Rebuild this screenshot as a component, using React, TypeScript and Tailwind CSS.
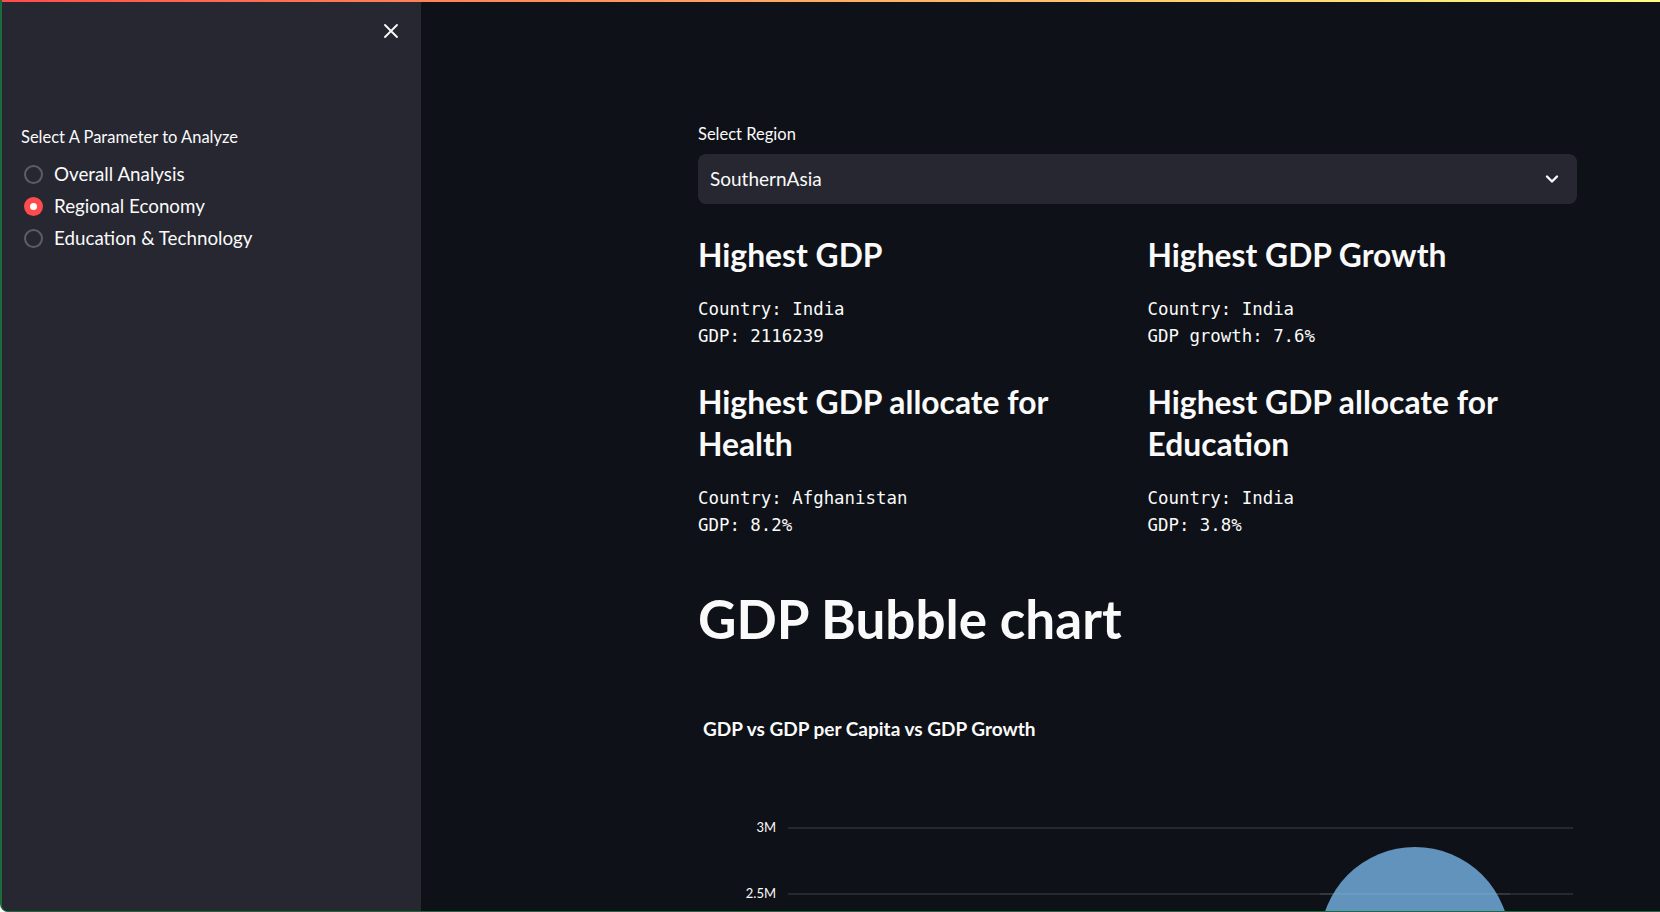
import React, { useState } from 'react';

const sans = { fontFamily: '"Lato", "Noto Sans", sans-serif' };
const mono = { fontFamily: '"DejaVu Sans Mono", "Liberation Mono", monospace' };

const options = ['Overall Analysis', 'Regional Economy', 'Education & Technology'];

const stats = [
  { title: 'Highest GDP', lines: ['Country: India', 'GDP: 2116239'] },
  { title: 'Highest GDP Growth', lines: ['Country: India', 'GDP growth: 7.6%'] },
  { title: 'Highest GDP allocate for Health', lines: ['Country: Afghanistan', 'GDP: 8.2%'] },
  { title: 'Highest GDP allocate for Education', lines: ['Country: India', 'GDP: 3.8%'] },
];

function Radio({ label, checked, onClick }: { label: string; checked: boolean; onClick: () => void }) {
  return (
    <button onClick={onClick} className="flex items-center h-[32px] text-left">
      {checked ? (
        <span className="w-[19px] h-[19px] rounded-full bg-[#ff4b4b] flex items-center justify-center ml-[3px]">
          <span className="w-[7px] h-[7px] rounded-full bg-white" />
        </span>
      ) : (
        <span className="w-[19px] h-[19px] rounded-full border-2 border-[#5c5e66] ml-[3px]" />
      )}
      <span className="ml-[11px] text-[18.8px] text-[#fafafa]">{label}</span>
    </button>
  );
}

function StatBlock({ title, lines }: { title: string; lines: string[] }) {
  return (
    <div>
      <h3 className="text-[31.8px] leading-[42px] font-bold text-[#fafafa]">{title}</h3>
      <div className="mt-[20px] text-[17.4px] leading-[27px] text-[#fafafa]" style={mono}>
        {lines.map((l) => (
          <div key={l}>{l}</div>
        ))}
      </div>
    </div>
  );
}

function BubbleChart() {
  return (
    <svg width="879" height="200" className="block">
      <text x="78" y="71" textAnchor="end" fontSize="13" fill="#fafafa" style={sans}>3M</text>
      <text x="78" y="137" textAnchor="end" fontSize="13" fill="#fafafa" style={sans}>2.5M</text>
      <line x1="90" x2="875" y1="67" y2="67" stroke="#2d3038" strokeWidth="1.5" />
      <line x1="90" x2="875" y1="133" y2="133" stroke="#2d3038" strokeWidth="1.5" />
      <circle cx="717" cy="181" r="95" fill="#6193bc" />
      <line x1="622" x2="812" y1="133" y2="133" stroke="#ffffff" strokeOpacity="0.1" strokeWidth="1.5" />
    </svg>
  );
}

export default function App() {
  const [choice, setChoice] = useState('Regional Economy');

  return (
    <div className="w-[1660px] h-[912px] overflow-hidden bg-[#0e1117] flex flex-col border-l-2 border-b border-[#1c6b3b] rounded-bl-lg" style={sans}>
      {/* decoration bar */}
      <div className="h-[2px] shrink-0 bg-gradient-to-r from-[#ff4b4b] to-[#fffd80]" />

      <div className="flex flex-1 min-h-0">
        {/* Sidebar */}
        <aside className="w-[419px] shrink-0 bg-[#262730] flex flex-col px-[19px]">
          <div className="flex justify-end pt-[21px] pr-[3px]">
            <button className="text-[#fafafa]">
              <svg width="16" height="16" viewBox="0 0 16 16">
                <path d="M2 2 L14 14 M14 2 L2 14" stroke="currentColor" strokeWidth="1.9" strokeLinecap="round" />
              </svg>
            </button>
          </div>
          <p className="mt-[87px] text-[16.5px] leading-[22px] text-[#fafafa]">Select A Parameter to Analyze</p>
          <div className="mt-[10px] flex flex-col">
            {options.map((o) => (
              <Radio key={o} label={o} checked={choice === o} onClick={() => setChoice(o)} />
            ))}
          </div>
        </aside>

        {/* Main */}
        <main className="flex-1 min-w-0 pl-[277px] pt-[121px]">
          <div className="w-[879px]">
            <label className="block text-[16.5px] leading-[22px] text-[#fafafa]">Select Region</label>
            <div className="mt-[9px] h-[50px] rounded-[8px] bg-[#262730] flex items-center justify-between pl-[12px] pr-[18px]">
              <span className="text-[19px] text-[#fafafa]">SouthernAsia</span>
              <svg width="14" height="10" viewBox="0 0 14 10">
                <path d="M2 2.5 L7 7.5 L12 2.5" stroke="#fafafa" strokeWidth="2.4" fill="none" strokeLinecap="round" strokeLinejoin="round" />
              </svg>
            </div>

            <div className="mt-[30px] grid grid-cols-2 gap-x-[20px] gap-y-[31px]">
              {stats.map((s) => (
                <StatBlock key={s.title} title={s.title} lines={s.lines} />
              ))}
            </div>

            <h1 className="mt-[46px] text-[53px] leading-[68px] font-bold text-[#fafafa]">GDP Bubble chart</h1>

            <p className="mt-[64px] ml-[5px] text-[19px] leading-[24px] font-bold text-[#fafafa]">GDP vs GDP per Capita vs GDP Growth</p>

            <div className="mt-[20px]">
              <BubbleChart />
            </div>
          </div>
        </main>
      </div>
    </div>
  );
}
